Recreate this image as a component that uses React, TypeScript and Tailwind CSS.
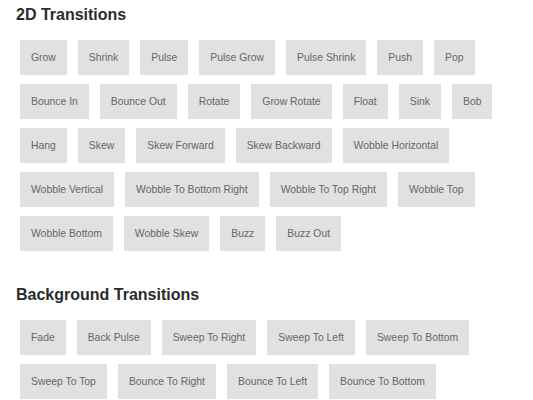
const transitions2d = [
  'Grow', 'Shrink', 'Pulse', 'Pulse Grow', 'Pulse Shrink', 'Push', 'Pop',
  'Bounce In', 'Bounce Out', 'Rotate', 'Grow Rotate', 'Float', 'Sink', 'Bob',
  'Hang', 'Skew', 'Skew Forward', 'Skew Backward', 'Wobble Horizontal',
  'Wobble Vertical', 'Wobble To Bottom Right', 'Wobble To Top Right', 'Wobble Top',
  'Wobble Bottom', 'Wobble Skew', 'Buzz', 'Buzz Out',
];

const backgroundTransitions = [
  'Fade', 'Back Pulse', 'Sweep To Right', 'Sweep To Left', 'Sweep To Bottom',
  'Sweep To Top', 'Bounce To Right', 'Bounce To Left', 'Bounce To Bottom',
];

function Section({ title, items }: { title: string; items: string[] }) {
  return (
    <section>
      <h2 className="text-[16px] leading-[18px] font-bold text-[#2b2b2b]">{title}</h2>
      <div className="mt-[16px] pl-1 flex flex-wrap gap-x-[11px] gap-y-[9px]">
        {items.map((item) => (
          <a
            key={item}
            href="#"
            className="h-[35px] px-[11px] flex items-center bg-[#e1e1e1] text-[#666] text-[10.4px] whitespace-nowrap"
          >
            {item}
          </a>
        ))}
      </div>
    </section>
  );
}

export default function App() {
  return (
    <div className="w-[533px] h-[400px] overflow-hidden bg-white px-4 pt-[6px] font-['Liberation_Sans',Arial,sans-serif]">
      <div className="flex flex-col gap-[35px]">
        <Section title="2D Transitions" items={transitions2d} />
        <Section title="Background Transitions" items={backgroundTransitions} />
      </div>
    </div>
  );
}
